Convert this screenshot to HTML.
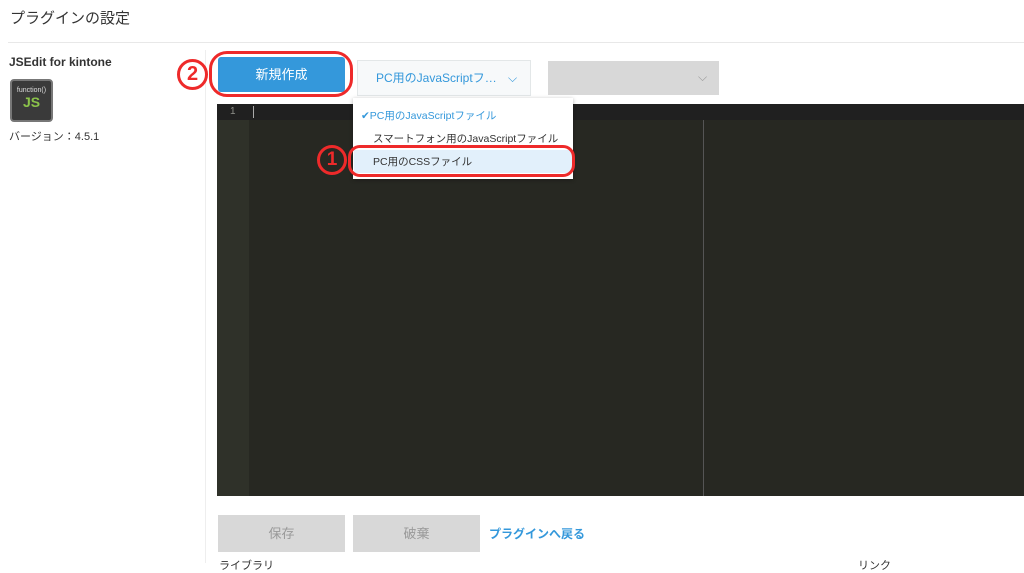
<!DOCTYPE html>
<html><head><meta charset="utf-8"><style>
*{margin:0;padding:0;box-sizing:border-box}
body{width:1024px;height:563px;overflow:hidden;background:#fff;font-family:"Liberation Sans","Noto Sans CJK JP",sans-serif;color:#333;position:relative}
.a{position:absolute}
</style></head><body>
<div class="a" style="left:10px;top:7px;font-size:15px;color:#333">プラグインの設定</div>
<div class="a" style="left:8px;top:42px;width:1016px;height:1px;background:#e8e8e8"></div>
<div class="a" style="left:205px;top:50px;width:1px;height:513px;background:#eee"></div>
<div class="a" style="left:9px;top:55px;font-size:12px;font-weight:bold;color:#333">JSEdit for kintone</div>
<div class="a" style="left:10px;top:79px;width:43px;height:43px;background:#3a3a3a;border:2px solid #777;border-radius:4px;text-align:center">
<div style="font-size:7px;color:#ddd;margin-top:6px">function()</div>
<div style="font-size:14px;font-weight:bold;color:#8bc34a;line-height:16px">JS</div></div>
<div class="a" style="left:9px;top:128px;font-size:11px">バージョン：4.5.1</div>

<div class="a" style="left:217px;top:104px;width:807px;height:392px;background:#272822"></div>
<div class="a" style="left:217px;top:104px;width:32px;height:392px;background:#2f3129"></div>
<div class="a" style="left:217px;top:104px;width:807px;height:16px;background:#202020"></div>
<div class="a" style="left:230px;top:106px;font-size:10px;color:#8f908a">1</div>
<div class="a" style="left:253px;top:106px;width:1px;height:12px;background:#aaa"></div>
<div class="a" style="left:703px;top:120px;width:1px;height:376px;background:#555"></div>

<div class="a" style="left:218px;top:57px;width:127px;height:35px;background:#3498db;border-radius:3px;color:#fff;font-size:13px;text-align:center;line-height:35px">新規作成</div>
<div class="a" style="left:209px;top:51px;width:144px;height:46px;border:3px solid #ee2a2a;border-radius:18px"></div>
<div class="a" style="left:177px;top:59px;width:31px;height:31px;border:3px solid #ee2a2a;border-radius:50%;color:#ee2a2a;font-weight:bold;font-size:20px;text-align:center;line-height:25px">2</div>

<div class="a" style="left:357px;top:60px;width:174px;height:36px;background:#f7f9fa;border:1px solid #e3e7e8;color:#3498db;font-size:12px;line-height:34px;padding-left:18px">PC用のJavaScriptフ…<span style="position:absolute;left:150px;top:0;color:#3498db">⌵</span></div>
<div class="a" style="left:548px;top:61px;width:171px;height:34px;background:#d8d8d8;color:#999;font-size:12px;line-height:32px"><span style="position:absolute;left:150px">⌵</span></div>

<div class="a" style="left:353px;top:98px;width:220px;height:81px;background:#fff;box-shadow:0 1px 4px rgba(0,0,0,.3)"></div>
<div class="a" style="left:354px;top:150px;width:218px;height:23px;background:#e2f0fb"></div>
<div class="a" style="left:361px;top:108px;font-size:10.5px;color:#3498db">✔PC用のJavaScriptファイル</div>
<div class="a" style="left:373px;top:131px;font-size:10.5px;color:#333">スマートフォン用のJavaScriptファイル</div>
<div class="a" style="left:373px;top:154px;font-size:10.5px;color:#333">PC用のCSSファイル</div>
<div class="a" style="left:348px;top:145px;width:227px;height:32px;border:3px solid #ee2a2a;border-radius:12px"></div>
<div class="a" style="left:317px;top:145px;width:30px;height:30px;border:3px solid #ee2a2a;border-radius:50%;color:#ee2a2a;font-weight:bold;font-size:19px;text-align:center;line-height:24px">1</div>

<div class="a" style="left:218px;top:515px;width:127px;height:37px;background:#d8d8d8;color:#999;font-size:13px;text-align:center;line-height:37px">保存</div>
<div class="a" style="left:353px;top:515px;width:127px;height:37px;background:#d8d8d8;color:#999;font-size:13px;text-align:center;line-height:37px">破棄</div>
<div class="a" style="left:489px;top:525px;font-size:12px;color:#3498db;font-weight:bold">プラグインへ戻る</div>
<div class="a" style="left:219px;top:557px;font-size:11px">ライブラリ</div>
<div class="a" style="left:858px;top:557px;font-size:11px">リンク</div>
</body></html>
